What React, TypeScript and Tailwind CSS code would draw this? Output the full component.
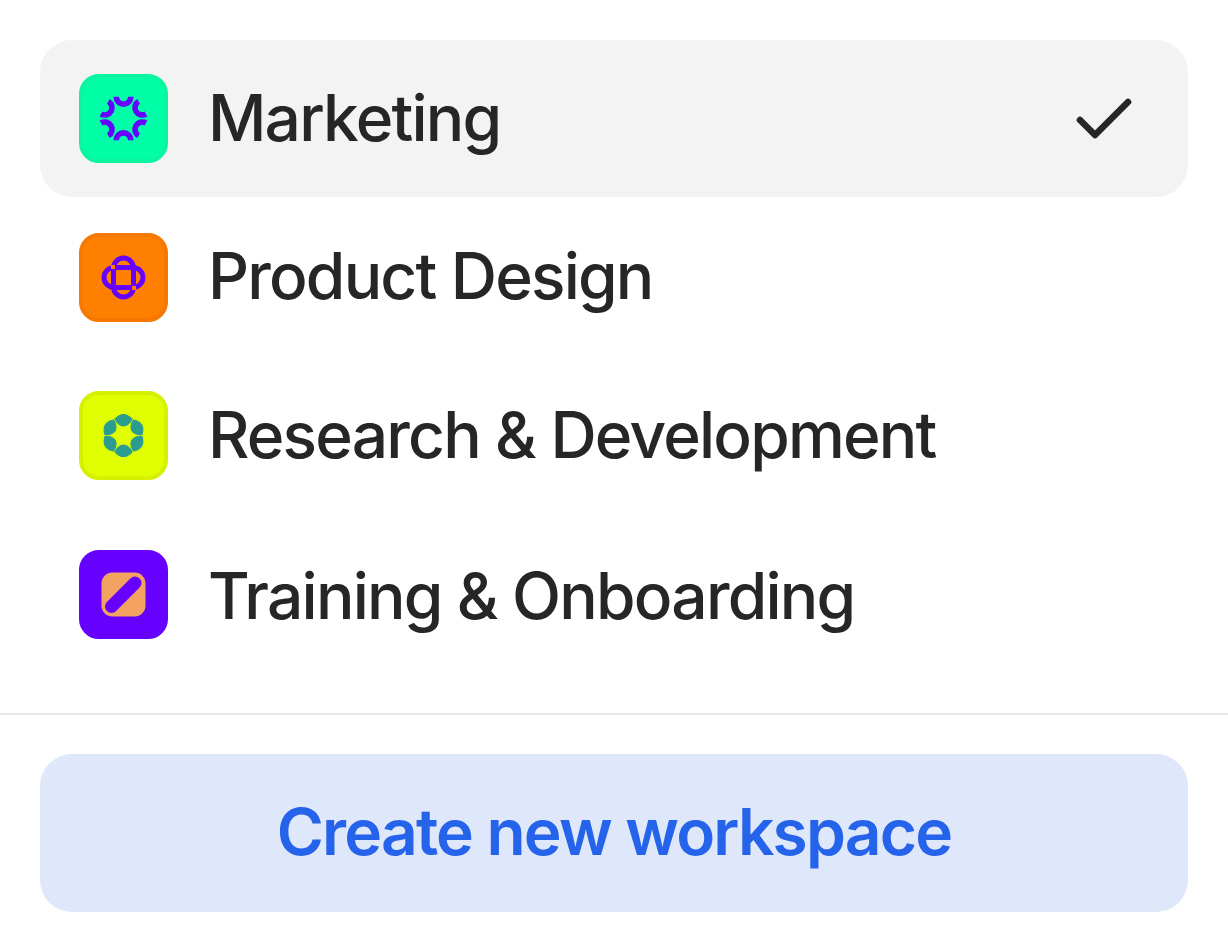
import React from 'react';
import { Check } from 'lucide-react';

const MarketingGlyph = () => (
  <svg width="81" height="81" viewBox="-40.5 -40.5 81 81" fill="none">
    {[0, 60, 120, 180, 240, 300].map((a) => (
      <path key={a} d="M-7.3 -21.7A7.3 7.3 0 0 0 7.3 -21.7" stroke="#6600ff" strokeWidth="5.6" transform={`rotate(${a})`} />
    ))}
  </svg>
);

const ProductGlyph = () => (
  <svg width="81" height="81" viewBox="-40.5 -40.5 81 81" fill="none">
    <rect x="-10" y="-19.5" width="20" height="39" rx="10" stroke="#6600ff" strokeWidth="5" />
    <rect x="-19.5" y="-10" width="39" height="20" rx="10" stroke="#6600ff" strokeWidth="5" />
    <rect x="-12.5" y="-12.5" width="4" height="4" fill="#ff7a00" />
    <rect x="8.5" y="8.5" width="4" height="4" fill="#ff7a00" />
  </svg>
);

const ResearchGlyph = () => (
  <svg width="81" height="81" viewBox="-40.5 -40.5 81 81">
    {[0, 60, 120, 180, 240, 300].map((a) => (
      <path
        key={a}
        d="M-8.4 -16.5Q0 -25.5 8.4 -16.5C7 -13 3.6 -9.7 0 -9.7C-3.6 -9.7 -7 -13 -8.4 -16.5Z"
        fill="#2a9d8f"
        stroke="#2a9d8f"
        strokeWidth="1.2"
        strokeLinejoin="round"
        transform={`rotate(${a})`}
      />
    ))}
  </svg>
);

const TrainingGlyph = () => (
  <svg width="81" height="81" viewBox="-40.5 -40.5 81 81" fill="none">
    <rect x="-22" y="-22" width="44" height="44" rx="11" fill="#f4a261" />
    <path d="M-12 12L11.5 -11.5" stroke="#6600ff" strokeWidth="13" strokeLinecap="round" />
  </svg>
);

const workspaces = [
  { name: 'Marketing', box: 'bg-[#00ffa6] border-[#0bf5a0]', glyph: <MarketingGlyph />, label: 'pb-[2px]', active: true },
  { name: 'Product Design', box: 'bg-[#ff7f00] border-[#f57800]', glyph: <ProductGlyph />, label: 'pb-[2px]', active: false },
  { name: 'Research & Development', box: 'bg-[#e0ff00] border-[#d6f000]', glyph: <ResearchGlyph />, label: 'pb-[2px]', active: false },
  { name: 'Training & Onboarding', box: 'bg-[#6600ff] border-[#6600ff]', glyph: <TrainingGlyph />, label: 'pt-[2px]', active: false },
];

export default function App() {
  return (
    <div className="h-[952px] bg-white pt-10 font-['Inter',sans-serif] text-[#262626]">
      <div className="flex flex-col gap-[1.33px] px-10">
        {workspaces.map((w) => (
          <div
            key={w.name}
            className={`flex h-[157.33px] items-center justify-between rounded-[32px] pl-[39px] pr-[48px] ${w.active ? 'bg-[#f3f3f3]' : ''}`}
          >
            <div className="flex items-center gap-[40px]">
              <div className={`flex h-[89px] w-[89px] items-center justify-center rounded-[20px] border-4 ${w.box}`}>
                {w.glyph}
              </div>
              <span className={`text-[64px] leading-none font-[450] tracking-[-0.028em] ${w.label}`}>{w.name}</span>
            </div>
            {w.active && <Check className="mt-[3px] h-[72px] w-[72px] text-[#262626]" strokeWidth={2.2} />}
          </div>
        ))}
      </div>
      <div className="mt-10 border-t-2 border-[#e8e8e8] px-10 pt-[39px]">
        <button className="flex h-[157.33px] w-full items-center justify-center rounded-[32px] bg-[#dfe7fb] pb-[2px] text-[64px] font-semibold tracking-[-0.028em] text-[#2563eb]">
          Create new workspace
        </button>
      </div>
    </div>
  );
}
